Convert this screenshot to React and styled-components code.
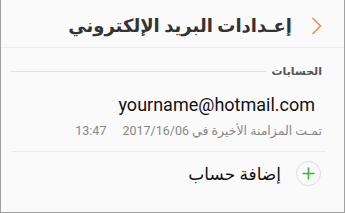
import React from "react";
import styled, { createGlobalStyle } from "styled-components";

const Global = createGlobalStyle`
  html, body { margin: 0; padding: 0; background: #fafafa; }
  * { box-sizing: border-box; }
`;

const Frame = styled.div`
  width: 345px;
  height: 213px;
  background: #fafafa;
  border: 1px solid #a0a0a0;
  border-top: none;
  direction: rtl;
  font-family: Roboto, "DejaVu Sans", sans-serif;
  overflow: hidden;
`;

const Header = styled.div`
  height: 48px;
  display: flex;
  align-items: center;
  padding: 4px 21px 0 0;
  gap: 19px;
  border-bottom: 1px solid #ececec;
`;

const Back = styled.svg`
  width: 12px;
  height: 18px;
  flex: none;
`;

const Title = styled.h1`
  margin: 0;
  font-size: 18px;
  font-weight: bold;
  color: #333;
`;

const Section = styled.div`
  padding: 17px 22px 0 10px;
  display: flex;
  align-items: center;
  gap: 6px;
`;

const SectionLabel = styled.span`
  font-size: 11px;
  font-weight: bold;
  color: #555;
`;

const SectionLine = styled.div`
  flex: 1;
  height: 1px;
  background: #e2e2e2;
`;

const Account = styled.div`
  margin: 0 18px 0 10px;
  padding: 15px 4px 13px 0;
  border-bottom: 1px solid #ececec;
`;

const Email = styled.div`
  font-size: 18px;
  color: #111;
  direction: ltr;
  text-align: right;
  line-height: 24px;
  padding-right: 7px;
`;

const Sync = styled.div`
  display: flex;
  gap: 16px;
  font-size: 12.5px;
  color: #888;
  margin-top: 6px;
`;

const AddRow = styled.div`
  display: flex;
  align-items: center;
  gap: 15px;
  padding: 9px 23px 0 0;
`;

const PlusCircle = styled.div`
  width: 25px;
  height: 25px;
  border-radius: 50%;
  border: 1px solid #dcdcdc;
  display: flex;
  align-items: center;
  justify-content: center;
`;

const AddLabel = styled.span`
  font-size: 17px;
  color: #111;
`;

export default function App() {
  return (
    <>
      <Global />
      <Frame>
        <Header>
          <Back viewBox="0 0 12 18">
            <polyline points="1.5,1 9.5,9 1.5,17" fill="none" stroke="#f5885a" strokeWidth="1.6" />
          </Back>
          <Title>إعـدادات البريد الإلكتروني</Title>
        </Header>
        <Section>
          <SectionLabel>الحسابات</SectionLabel>
          <SectionLine />
        </Section>
        <Account>
          <Email>yourname@hotmail.com</Email>
          <Sync>
            <span>تمـت المزامنة الأخيرة في 2017/16/06</span>
            <span>13:47</span>
          </Sync>
        </Account>
        <AddRow>
          <PlusCircle>
            <svg width="13" height="13" viewBox="0 0 13 13">
              <path d="M6.5 0.5V12.5M0.5 6.5H12.5" stroke="#3cb43c" strokeWidth="1.6" />
            </svg>
          </PlusCircle>
          <AddLabel>إضافة حساب</AddLabel>
        </AddRow>
      </Frame>
    </>
  );
}
